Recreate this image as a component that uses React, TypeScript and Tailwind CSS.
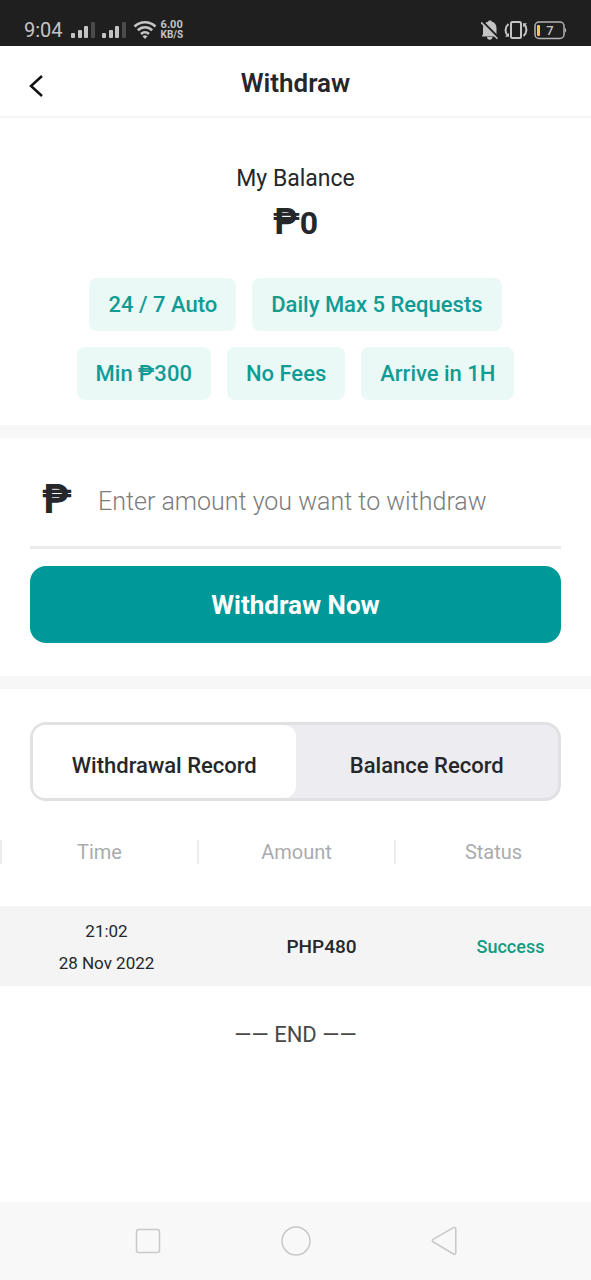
import { useState } from 'react'

type RecordTab = 'withdrawal' | 'balance'

interface WithdrawalRecord {
  time: string
  date: string
  amount: string
  status: string
}

const FEATURE_ROWS = [
  ['24 / 7 Auto', 'Daily Max 5 Requests'],
  ['Min ₱300', 'No Fees', 'Arrive in 1H'],
]

const TABS: { id: RecordTab; label: string }[] = [
  { id: 'withdrawal', label: 'Withdrawal Record' },
  { id: 'balance', label: 'Balance Record' },
]

const COLUMNS = ['Time', 'Amount', 'Status']

const RECORDS: WithdrawalRecord[] = [
  { time: '21:02', date: '28 Nov 2022', amount: 'PHP480', status: 'Success' },
]

function SignalIcon() {
  return (
    <svg width="25" height="18" viewBox="0 0 25 18" fill="#c4c4c4" aria-hidden="true">
      <rect x="0" y="12" width="4" height="5" rx="1" />
      <rect x="7" y="9" width="4" height="8" rx="1" />
      <rect x="13" y="5" width="4" height="12" rx="1" />
      <rect x="20" y="1" width="4" height="16" rx="1" fill="#4b4b4b" />
    </svg>
  )
}

function WifiIcon() {
  return (
    <svg width="24" height="20" viewBox="0 0 24 20" fill="none" stroke="#c4c4c4" aria-hidden="true">
      <path d="M1.5 6.5C7.5.8 16.5.8 22.5 6.5" strokeWidth="2.6" />
      <path d="M4.8 10.3c4.2-4 10.2-4 14.4 0" strokeWidth="2.6" />
      <path d="M8 14c2.4-2.3 5.6-2.3 8 0" strokeWidth="2.6" />
      <path d="M9.5 16.2c1.5-1.3 3.5-1.3 5 0L12 19z" fill="#c4c4c4" stroke="none" />
    </svg>
  )
}

function BellOffIcon() {
  return (
    <svg width="17" height="20" viewBox="0 0 17 20" aria-hidden="true">
      <path
        d="M9 .5c1 0 1.800.5 2 1.300 2.800.8 4.500 3 4.500 6V14l1 2.500H.8L2 14V8c0-3.200 2-5.400 5-6.200C7.200 1 8 .5 9 .5zM6 17h5.500c0 1.600-1.100 2.700-2.700 2.700S6 18.600 6 17z"
        fill="#c4c4c4"
      />
      <path d="M0 0 17 17" stroke="#1f1f1f" strokeWidth="2" />
      <path d="M0 2.300 16.500 18.800" stroke="#c4c4c4" strokeWidth="1.600" />
    </svg>
  )
}

function VibrateIcon() {
  return (
    <svg width="24" height="20" viewBox="0 0 24 20" fill="none" stroke="#c4c4c4" strokeWidth="2" aria-hidden="true">
      <rect x="7" y="2" width="10" height="16" rx="1.5" />
      <path d="M4.500 4C.8 7 .8 12.500 3.500 15.500M19.500 16c3.700-3 3.700-8.500 1-11.500" />
      <path d="M1 16.800h4v-4zM23 3.200h-4v4z" fill="#c4c4c4" stroke="none" />
    </svg>
  )
}

function BatteryIcon() {
  return (
    <svg width="33" height="19" viewBox="0 0 33 19" aria-hidden="true">
      <rect x="1" y="1" width="29" height="16.5" rx="4" fill="none" stroke="#b4b4b4" strokeWidth="1.5" />
      <path d="M31 7c1.500.5 1.500 4 0 4.500z" fill="#b4b4b4" />
      <rect x="3" y="4" width="3" height="11" rx="1" fill="#f5c24c" />
      <text x="16" y="14" textAnchor="middle" fontSize="13" fontWeight="500" fill="#c4c4c4">
        7
      </text>
    </svg>
  )
}

function StatusBar() {
  return (
    <div className="flex h-[46px] items-end justify-between bg-[#1f1f1f] px-6 pb-1.5 text-[#c4c4c4]">
      <div className="flex h-5 items-center">
        <span className="text-xl leading-5">9:04</span>
        <div className="ml-2 flex items-center gap-1.5">
          <SignalIcon />
          <SignalIcon />
          <WifiIcon />
        </div>
        <div className="ml-1 text-[10px] leading-[10px] font-bold">
          <div className="text-[11px]">6.00</div>
          <div>KB/S</div>
        </div>
      </div>
      <div className="flex h-5 items-center gap-1.5">
        <BellOffIcon />
        <VibrateIcon />
        <BatteryIcon />
      </div>
    </div>
  )
}

function PageHeader() {
  return (
    <header className="grid h-[72px] grid-cols-[72px_1fr_72px] items-center border-b-2 border-[#f5f5f5]">
      <button type="button" aria-label="Back" className="flex h-full items-center pt-2.5 pl-7">
        <svg width="16" height="24" viewBox="0 0 16 24" fill="none" stroke="#111" strokeWidth="2.5" aria-hidden="true">
          <path d="M14 2 3 12l11 10" />
        </svg>
      </button>
      <h1 className="pt-1 text-center text-[26px] leading-8 font-semibold">Withdraw</h1>
    </header>
  )
}

function BalanceSection() {
  return (
    <section className="flex flex-col items-center px-7 pt-[45px] pb-[25px]">
      <h2 className="text-[23px] leading-8">My Balance</h2>
      <p className="mt-[7px] text-[36px] leading-10 font-bold">
        ₱<span className="text-[32px]">0</span>
      </p>
      <div className="mt-[35px] flex flex-col gap-4">
        {FEATURE_ROWS.map((row) => (
          <ul key={row[0]} className="flex justify-center gap-4">
            {row.map((feature) => (
              <li
                key={feature}
                className="rounded-lg bg-[#ebf9f6] px-[19px] py-3 text-[22px] leading-[29px] font-medium text-[#109c94]"
              >
                {feature}
              </li>
            ))}
          </ul>
        ))}
      </div>
    </section>
  )
}

function WithdrawForm() {
  const [amount, setAmount] = useState('')

  return (
    <form
      className="border-y-[13px] border-[#f7f7f7] px-[30px] pt-8 pb-[33px]"
      onSubmit={(event) => event.preventDefault()}
    >
      <div className="flex h-[79px] items-center border-b-[3px] border-[#ebebeb] pl-3">
        <label htmlFor="amount" className="w-14 pb-4 text-[40px] leading-10 font-bold" aria-label="Amount">
          ₱
        </label>
        <input
          id="amount"
          value={amount}
          onChange={(event) => setAmount(event.target.value)}
          inputMode="decimal"
          placeholder="Enter amount you want to withdraw"
          className="min-w-0 flex-1 pb-3 text-[25px] leading-9 font-light outline-none placeholder:text-[#7c7c7c]"
        />
      </div>
      <button
        type="submit"
        className="mt-[17px] h-[77px] w-full rounded-2xl bg-[#009999] text-[26px] leading-8 font-bold text-white"
      >
        Withdraw Now
      </button>
    </form>
  )
}

function RecordTabs() {
  const [activeTab, setActiveTab] = useState<RecordTab>('withdrawal')

  return (
    <div role="tablist" className="mx-[30px] mt-[33px] flex h-[79px] rounded-2xl border-[3px] border-[#e1e1e4] bg-[#ececf1]">
      {TABS.map((tab) => (
        <button
          key={tab.id}
          type="button"
          role="tab"
          aria-selected={tab.id === activeTab}
          onClick={() => setActiveTab(tab.id)}
          className={`flex-1 rounded-xl pt-2 text-[22px] leading-8 font-medium ${tab.id === activeTab ? 'bg-white' : ''}`}
        >
          {tab.label}
        </button>
      ))}
    </div>
  )
}

function RecordTable() {
  return (
    <table className="mt-[39px] w-full table-fixed border-collapse text-center">
      <thead>
        <tr>
          {COLUMNS.map((column) => (
            <th key={column} scope="col" className="p-0 pb-[42px] text-xl leading-6 font-normal text-[#aaabad]">
              <div className="border-l-2 border-[#ececec]">{column}</div>
            </th>
          ))}
        </tr>
      </thead>
      <tbody>
        {RECORDS.map((record) => (
          <tr key={`${record.date} ${record.time}`} className="h-20 bg-[#f4f4f4]">
            <td className="p-0 pt-0.5 pl-4 text-[17px] leading-8">
              <div>{record.time}</div>
              <div>{record.date}</div>
            </td>
            <td className="p-0 pt-0.5 pl-[52px] text-[19px] leading-6 font-medium">{record.amount}</td>
            <td className="p-0 pt-0.5 pl-9 text-lg leading-6 font-medium text-[#109c84]">{record.status}</td>
          </tr>
        ))}
      </tbody>
    </table>
  )
}

function NavigationBar() {
  return (
    <nav className="mt-auto grid h-[78px] grid-cols-[1fr_148px_148px_148px_1fr] items-center justify-items-center bg-[#f8f8f8]">
      <button type="button" aria-label="Recent apps" className="col-start-2">
        <svg width="26" height="26" viewBox="0 0 26 26" fill="none" stroke="#c8c8c8" strokeWidth="1.5" aria-hidden="true">
          <rect x="1.5" y="1.5" width="23" height="23" rx="2.5" />
        </svg>
      </button>
      <button type="button" aria-label="Home">
        <svg width="30" height="30" viewBox="0 0 30 30" fill="none" stroke="#c8c8c8" strokeWidth="1.5" aria-hidden="true">
          <circle cx="15" cy="15" r="14" />
        </svg>
      </button>
      <button type="button" aria-label="Back">
        <svg width="26" height="30" viewBox="0 0 26 30" fill="none" stroke="#c8c8c8" strokeWidth="1.5" aria-hidden="true">
          <path d="M22.5 1.7 2.3 13.2c-1.300.8-1.300 2 0 2.800l20.200 12c1.200.7 2.300 0 2.300-1.300V3c0-1.300-1.100-2-2.300-1.300z" />
        </svg>
      </button>
    </nav>
  )
}

function App() {
  return (
    <div className="flex min-h-screen flex-col bg-white font-['Roboto',sans-serif] text-[#25272b]">
      <StatusBar />
      <PageHeader />
      <main>
        <BalanceSection />
        <WithdrawForm />
        <RecordTabs />
        <RecordTable />
        <p className="pt-[33px] pb-8 text-center text-[22px] leading-8 text-[#47484a]">—— END ——</p>
      </main>
      <NavigationBar />
    </div>
  )
}

export default App
